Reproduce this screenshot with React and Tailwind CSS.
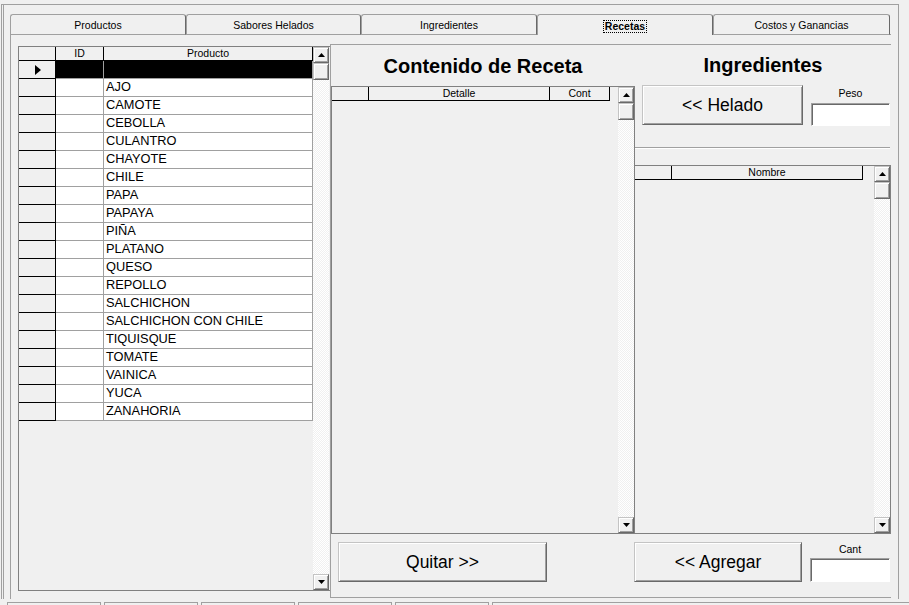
import React from 'react';

const products = [
  'AJO', 'CAMOTE', 'CEBOLLA', 'CULANTRO', 'CHAYOTE', 'CHILE', 'PAPA', 'PAPAYA', 'PIÑA', 'PLATANO',
  'QUESO', 'REPOLLO', 'SALCHICHON', 'SALCHICHON CON CHILE', 'TIQUISQUE', 'TOMATE', 'VAINICA', 'YUCA', 'ZANAHORIA',
];

const raised =
  'bg-[#f0f0f0] border border-[#c4c4c4] border-r-[#696969] border-b-[#696969] shadow-[inset_1px_1px_0_#fff,inset_-1px_-1px_0_#a0a0a0]';
const sunken =
  'bg-white border border-[#a0a0a0] border-r-white border-b-white shadow-[inset_1px_1px_0_#696969]';

function Arrow({ down }) {
  return (
    <svg width="7" height="4" viewBox="0 0 7 4">
      {down ? <polygon points="0,0 7,0 3.5,4" fill="#000" /> : <polygon points="3.5,0 7,4 0,4" fill="#000" />}
    </svg>
  );
}

function VScroll() {
  return (
    <div className="w-[16px] h-full flex flex-col">
      <div className={`h-[16px] flex items-center justify-center ${raised}`}>
        <Arrow />
      </div>
      <div className={`h-[17px] ${raised}`} />
      <div className="flex-1 bg-[repeating-conic-gradient(#ffffff_0_25%,#f0f0f0_0_50%)] bg-[length:2px_2px]" />
      <div className={`h-[16px] flex items-center justify-center ${raised}`}>
        <Arrow down />
      </div>
    </div>
  );
}

function Tab({ label, width, selected }) {
  return (
    <div
      className={`${width} h-[21px] pt-[2px] flex items-center justify-center border-t border-l border-r border-[#a0a0a0] border-r-[#696969] rounded-t-[3px] text-[10.5px] text-black ${
        selected ? 'font-bold' : 'border-b border-b-[#a0a0a0]'
      }`}
    >
      {selected ? (
        <span className="border border-dotted border-black px-[1px] leading-[11px]">{label}</span>
      ) : (
        label
      )}
    </div>
  );
}

function ProductGrid() {
  return (
    <div className="w-[312px] h-[545px] mt-[11px] ml-[7px] border-l border-t border-b border-[#808080] flex pr-[1px]">
      <div className="w-[294px] flex flex-col">
        <div className="flex h-[14px] text-[10.5px] leading-none">
          <div className="w-[37px] bg-[#f0f0f0] border-r border-b border-black" />
          <div className="w-[48px] bg-[#f0f0f0] border-r border-b border-black flex items-center justify-center">ID</div>
          <div className="w-[209px] bg-[#f0f0f0] border-r border-b border-black flex items-center justify-center">Producto</div>
        </div>
        <div className="flex h-[18px]">
          <div className="w-[37px] bg-[#f0f0f0] border-r border-b border-black flex items-center pl-[16px]">
            <svg width="6" height="10" viewBox="0 0 6 10">
              <polygon points="0,0 6,5 0,10" fill="#000" />
            </svg>
          </div>
          <div className="w-[48px] bg-black border-r border-b border-[#a0a0a0]" />
          <div className="w-[209px] bg-black border-r border-b border-[#a0a0a0]" />
        </div>
        {products.map((p) => (
          <div key={p} className="flex h-[18px]">
            <div className="w-[37px] bg-[#f0f0f0] border-r border-b border-black" />
            <div className="w-[48px] bg-white border-r border-b border-[#a0a0a0]" />
            <div className="w-[209px] bg-white border-r border-b border-[#a0a0a0] pl-[2px] flex items-center text-[12.8px] leading-none text-black">
              {p}
            </div>
          </div>
        ))}
      </div>
      <VScroll />
    </div>
  );
}

export default function App() {
  return (
    <div className="w-[909px] h-[605px] bg-[#f0f0f0] overflow-hidden pt-[4px] pl-[1px] font-['Liberation_Sans',Arial,sans-serif] text-black">
      <div className="w-[898px] h-[595px] border-t border-r border-l-[3px] border-double border-[#a0a0a0] pt-[9px] pl-[6px]">
        <div className="flex w-[881px] h-[21px]">
          <Tab label="Productos" width="w-[176px]" />
          <Tab label="Sabores Helados" width="w-[175px]" />
          <Tab label="Ingredientes" width="w-[176px]" />
          <Tab label="Recetas" width="w-[176px]" selected />
          <Tab label="Costos y Ganancias" width="w-[177px]" />
          <div className="flex-1 border-b border-[#a0a0a0]" />
        </div>

        <div className="w-[881px] h-[564px] border-l border-[#a0a0a0] flex items-start">
          <ProductGrid />

          <div className="w-[561px] h-[554px] mt-[9px] border-t border-l border-b border-[#a0a0a0] flex flex-col">
            <div className="flex h-[489px]">
              {/* Contenido de receta */}
              <div className="w-[304px] flex flex-col">
                <div className="h-[41px] flex items-center justify-center text-[20px] font-bold">Contenido de Receta</div>
                <div className="h-[448px] border border-[#808080] flex">
                  <div className="flex-1">
                    <div className="flex h-[14px] text-[10.5px] leading-none">
                      <div className="w-[37px] bg-[#f0f0f0] border-r border-b border-black" />
                      <div className="w-[181px] bg-[#f0f0f0] border-r border-b border-black flex items-center justify-center">Detalle</div>
                      <div className="w-[60px] bg-[#f0f0f0] border-r border-b border-black flex items-center justify-center">Cont</div>
                    </div>
                  </div>
                  <VScroll />
                </div>
              </div>

              {/* Ingredientes */}
              <div className="w-[256px] flex flex-col">
                <div className="h-[40px] flex items-center justify-center text-[20px] font-bold">Ingredientes</div>
                <div className="h-[41px] flex items-start">
                  <button className={`ml-[7px] w-[161px] h-[40px] text-[17.5px] flex items-center justify-center ${raised}`}>
                    &lt;&lt; Helado
                  </button>
                  <div className="ml-[8px] w-[79px] flex flex-col">
                    <div className="h-[18px] flex items-center justify-center text-[10.5px]">Peso</div>
                    <div className={`h-[23px] ${sunken}`} />
                  </div>
                </div>
                <div className="mt-[21px] h-[2px] mr-[1px] border-t border-[#a0a0a0] border-b border-b-white" />
                <div className="mt-[16px] h-[369px] border-t border-r border-b border-[#808080] flex">
                  <div className="flex-1">
                    <div className="flex h-[14px] text-[10.5px] leading-none">
                      <div className="w-[37px] bg-[#f0f0f0] border-r border-b border-black" />
                      <div className="w-[191px] bg-[#f0f0f0] border-r border-b border-black flex items-center justify-center">Nombre</div>
                    </div>
                  </div>
                  <VScroll />
                </div>
              </div>
            </div>

            <div className="h-[63px] flex items-start">
              <button className={`ml-[7px] mt-[8px] w-[209px] h-[40px] text-[17.5px] flex items-center justify-center ${raised}`}>
                Quitar &gt;&gt;
              </button>
              <button className={`ml-[87px] mt-[8px] w-[168px] h-[40px] text-[17.5px] flex items-center justify-center ${raised}`}>
                &lt;&lt; Agregar
              </button>
              <div className="ml-[8px] mt-[8px] w-[80px] flex flex-col">
                <div className="h-[16px] flex items-center justify-center text-[10.5px]">Cant</div>
                <div className={`h-[24px] ${sunken}`} />
              </div>
            </div>
          </div>
        </div>
      </div>

      <div className="flex mt-[3px] ml-[6px] h-[3px]">
        <div className="w-[94px] mr-[3px] border-t border-l border-r border-[#a0a0a0]" />
        <div className="w-[94px] mr-[3px] border-t border-l border-r border-[#a0a0a0]" />
        <div className="w-[94px] mr-[3px] border-t border-l border-r border-[#a0a0a0]" />
        <div className="w-[94px] mr-[3px] border-t border-l border-r border-[#a0a0a0]" />
        <div className="w-[94px] mr-[3px] border-t border-l border-r border-[#a0a0a0]" />
        <div className="flex-1 border-t border-l border-[#a0a0a0]" />
      </div>
    </div>
  );
}
